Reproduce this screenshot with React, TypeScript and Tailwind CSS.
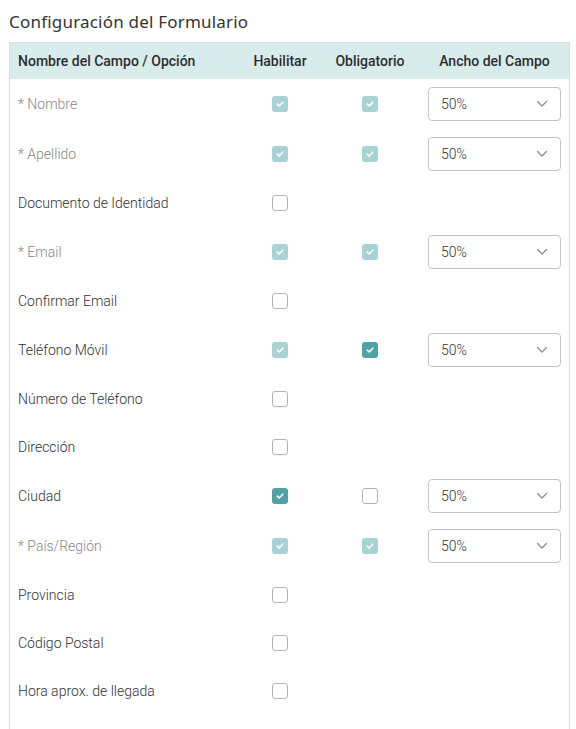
import React from 'react';

type Box = 'off' | 'on' | 'locked';

interface Field {
  label: string;
  muted?: boolean;
  enable: Box;
  required?: Box;
  width?: string;
}

const fields: Field[] = [
  { label: '* Nombre', muted: true, enable: 'locked', required: 'locked', width: '50%' },
  { label: '* Apellido', muted: true, enable: 'locked', required: 'locked', width: '50%' },
  { label: 'Documento de Identidad', enable: 'off' },
  { label: '* Email', muted: true, enable: 'locked', required: 'locked', width: '50%' },
  { label: 'Confirmar Email', enable: 'off' },
  { label: 'Teléfono Móvil', enable: 'locked', required: 'on', width: '50%' },
  { label: 'Número de Teléfono', enable: 'off' },
  { label: 'Dirección', enable: 'off' },
  { label: 'Ciudad', enable: 'on', required: 'off', width: '50%' },
  { label: '* País/Región', muted: true, enable: 'locked', required: 'locked', width: '50%' },
  { label: 'Provincia', enable: 'off' },
  { label: 'Código Postal', enable: 'off' },
  { label: 'Hora aprox. de llegada', enable: 'off' },
];

const Check: React.FC<{ state: Box }> = ({ state }) => {
  if (state === 'off') {
    return <span className="block w-4 h-4 rounded-[3px] border border-[#b3b3b3] bg-white" />;
  }
  return (
    <span
      className={
        'flex items-center justify-center w-4 h-4 rounded-[3px] ' +
        (state === 'on' ? 'bg-[#50a2a7]' : 'bg-[#a9d2d4]')
      }
    >
      <svg width="10" height="10" viewBox="0 0 10 10" fill="none">
        <polyline points="2.3,5.2 4.2,7 7.8,3.2" stroke="white" strokeWidth="1.6" strokeLinecap="round" strokeLinejoin="round" />
      </svg>
    </span>
  );
};

const WidthSelect: React.FC<{ value: string }> = ({ value }) => (
  <div className="flex items-center justify-between w-[133px] h-[34px] rounded-[4px] border border-[#c4c4c4] bg-white pl-3 pr-3">
    <span className="text-[14px] font-light text-[#333]">{value}</span>
    <svg width="12" height="8" viewBox="0 0 12 8" fill="none">
      <polyline points="1.5,1.5 6,6 10.5,1.5" stroke="#8a8a8a" strokeWidth="1.2" strokeLinecap="round" strokeLinejoin="round" />
    </svg>
  </div>
);

export default function App() {
  return (
    <div className="w-[576px] h-[729px] overflow-hidden bg-white font-['Roboto',sans-serif] flex flex-col">
      <div className="h-[42px] shrink-0 pl-[9px] flex items-center">
        <h2 className="font-['Noto_Sans',sans-serif] text-[17px] tracking-[0.2px] text-[#333] pt-[2px]">
          Configuración del Formulario
        </h2>
      </div>

      <div className="flex-1 ml-[9px] w-[561px] border-x border-t border-[#dcdcdc]">
        {/* header */}
        <div className="grid grid-cols-[225px_90px_90px_1fr] h-[36px] items-center bg-[#d8ecec] text-[14px] font-medium text-[#2e2e2e]">
          <div className="pl-[8px]">Nombre del Campo / Opción</div>
          <div className="text-center">Habilitar</div>
          <div className="text-center">Obligatorio</div>
          <div className="pl-[13px] pr-[8px] text-center">Ancho del Campo</div>
        </div>

        {fields.map((f) => (
          <div
            key={f.label}
            className={
              'grid grid-cols-[225px_90px_90px_1fr] items-center text-[14px] font-light ' +
              (f.width ? 'h-[50px]' : 'h-[48px]')
            }
          >
            <div className={'pl-[8px] ' + (f.muted ? 'text-[#888]' : 'text-[#333]')}>{f.label}</div>
            <div className="flex justify-center">
              <Check state={f.enable} />
            </div>
            <div className="flex justify-center">{f.required && <Check state={f.required} />}</div>
            <div className="pl-[13px]">{f.width && <WidthSelect value={f.width} />}</div>
          </div>
        ))}
      </div>
    </div>
  );
}
